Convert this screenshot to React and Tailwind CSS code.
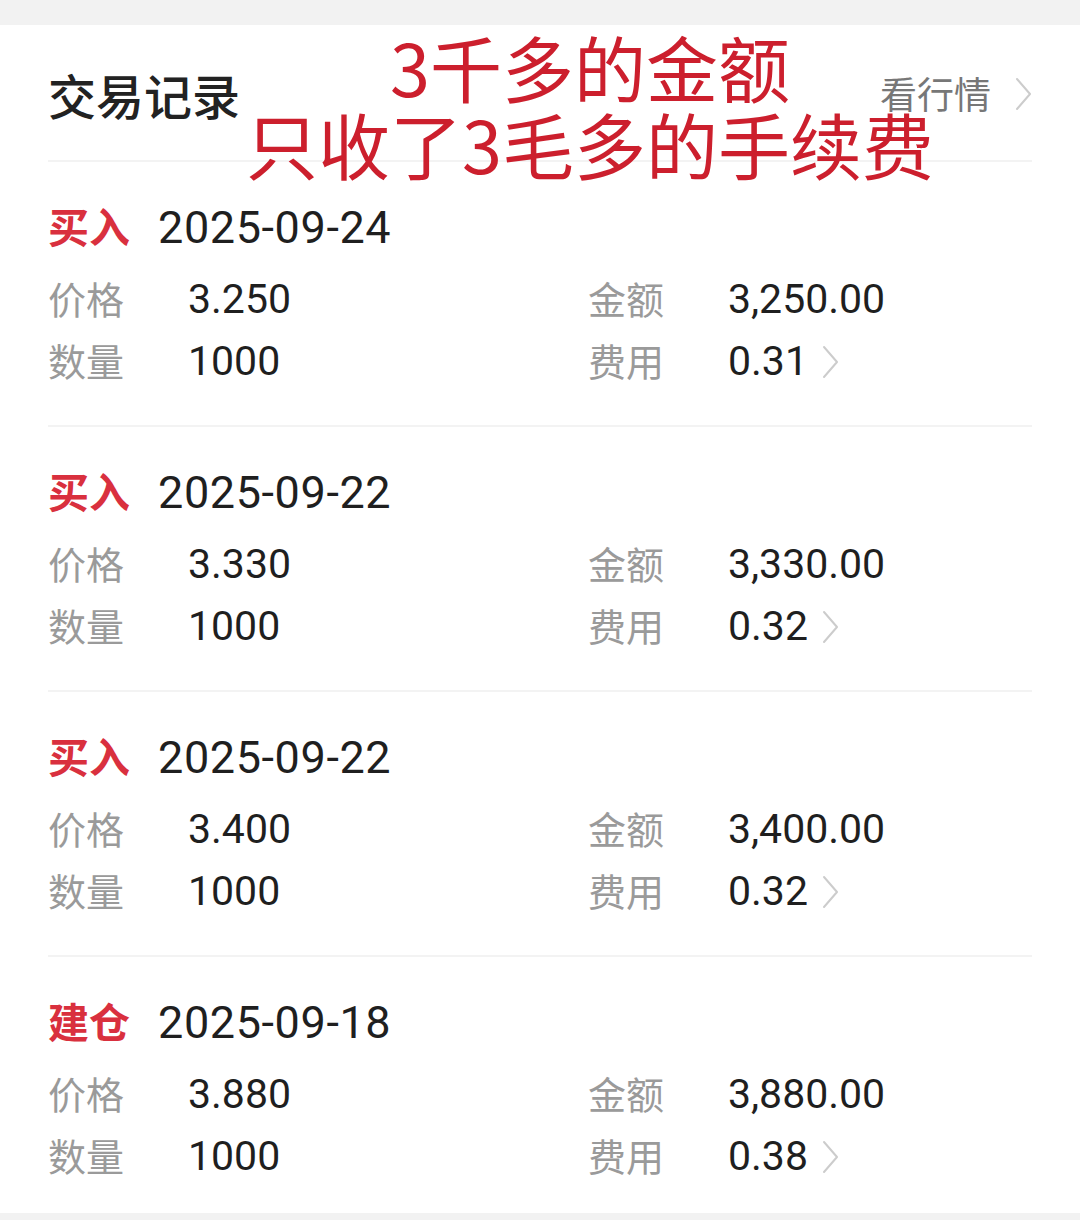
const trades = [
  { type: '买入', date: '2025-09-24', price: '3.250', amount: '3,250.00', qty: '1000', fee: '0.31' },
  { type: '买入', date: '2025-09-22', price: '3.330', amount: '3,330.00', qty: '1000', fee: '0.32' },
  { type: '买入', date: '2025-09-22', price: '3.400', amount: '3,400.00', qty: '1000', fee: '0.32' },
  { type: '建仓', date: '2025-09-18', price: '3.880', amount: '3,880.00', qty: '1000', fee: '0.38' },
];

const cjk = "font-['Noto_Sans_CJK_SC',sans-serif]";
const num = "font-['Roboto','Noto_Sans_CJK_SC',sans-serif]";

function Chevron({ className }) {
  return (
    <svg className={className} width="17" height="34" viewBox="0 0 17 34" fill="none">
      <polyline points="2,2 15,17 2,32" stroke="#cccccc" strokeWidth="2" strokeLinecap="round" strokeLinejoin="round" />
    </svg>
  );
}

function Field({ label, value, arrow }) {
  return (
    <div className="flex items-center h-[62px]">
      <span className={`${cjk} w-[140px] -mt-[6px] text-[38px] text-[#9a9a9a]`}>{label}</span>
      <span className={`${num} text-[41px] text-[#1f1f1f]`}>{value}</span>
      {arrow && <Chevron className="ml-[14px]" />}
    </div>
  );
}

function TradeItem({ t, last }) {
  return (
    <div className={`pt-[41px] pb-[32px] ${last ? '' : 'border-b-2 border-[#f3f3f3]'}`}>
      <div className="flex items-center h-[50px]">
        <span className={`${cjk} w-[110px] -mt-[4px] text-[41px] font-bold text-[#d9303e]`}>{t.type}</span>
        <span className={`${num} text-[45px] tracking-[0.6px] text-[#1f1f1f]`}>{t.date}</span>
      </div>
      <div className="mt-[16px] grid grid-cols-[540px_1fr]">
        <Field label="价格" value={t.price} />
        <Field label="金额" value={t.amount} />
        <Field label="数量" value={t.qty} />
        <Field label="费用" value={t.fee} arrow />
      </div>
    </div>
  );
}

export default function App() {
  return (
    <div className="w-[1080px] h-[1220px] bg-[#f2f2f2] pt-[25px]">
      <div className="relative bg-white h-[1188px] px-[48px]">
        <div className="flex items-center h-[137px] pt-[3px] border-b-2 border-[#f3f3f3]">
          <span className={`${cjk} text-[48px] font-medium text-[#222]`}>交易记录</span>
          <div className="ml-auto flex items-center">
            <span className={`${cjk} text-[37px] text-[#777]`}>看行情</span>
            <Chevron className="ml-[24px]" />
          </div>
        </div>
        {trades.map((t, i) => (
          <TradeItem key={i} t={t} last={i === trades.length - 1} />
        ))}
        <div className={`${cjk} absolute top-[2px] left-[100px] right-0 text-center text-[#cc1f2d] text-[72px] leading-[77px]`}>
          <div>3千多的金额</div>
          <div>只收了3毛多的手续费</div>
        </div>
      </div>
    </div>
  );
}
